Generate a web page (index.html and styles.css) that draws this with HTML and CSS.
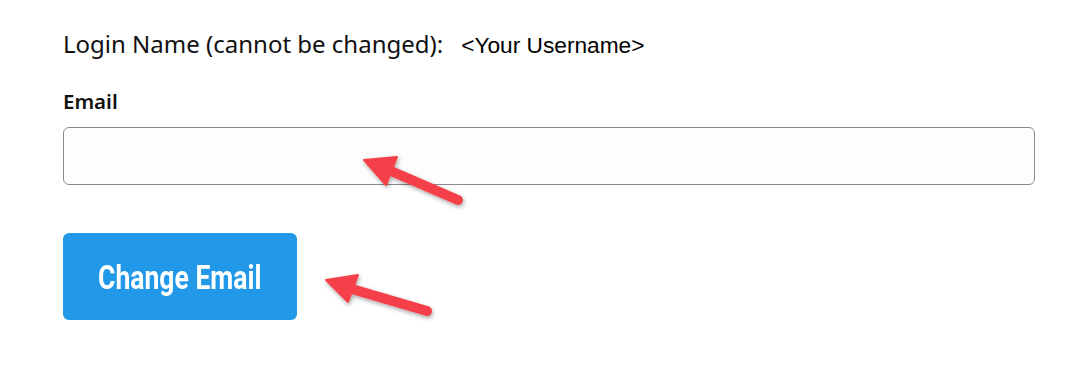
FILE: index.html
```html
<!DOCTYPE html>
<html>
<head>
	<title>Change Email</title>
	<meta charset="utf-8">
	<link rel="stylesheet" href="styles.css">
</head>
<body>
	<!--form start-->
	<div id="account">
		<div class="login_row">
			<span class="login_label">Login Name (cannot be changed):</span>
			<span class="login_value">&lt;Your Username&gt;</span>
		</div>
		<label class="email_label" for="email">Email</label>
		<input class="email_input" id="email" type="text">
		<button class="email_btn"><span>Change Email</span></button>

		<!--annotation arrows-->
		<svg class="arrows" width="1085" height="385" viewBox="0 0 1085 385">
			<defs>
				<filter id="shadow" x="-20%" y="-40%" width="140%" height="180%">
					<feDropShadow dx="1" dy="2" stdDeviation="2" flood-color="#000" flood-opacity="0.35"/>
				</filter>
			</defs>
			<g fill="#f54048" stroke="#f54048" filter="url(#shadow)">
				<line x1="458" y1="200" x2="384" y2="168" stroke-width="10" stroke-linecap="round"/>
				<polygon points="364,160 397,157 386,185" stroke-width="2" stroke-linejoin="round"/>
				<line x1="427" y1="311" x2="345" y2="287" stroke-width="10" stroke-linecap="round"/>
				<polygon points="326,280 358,275 348,302" stroke-width="2" stroke-linejoin="round"/>
			</g>
		</svg>
	</div>
	<!--end form-->
</body>
</html>
```

FILE: styles.css
```css
*{margin:0;padding:0;box-sizing:border-box;}
html,body{background:#fff;}
body{width:1085px;height:385px;overflow:hidden;}
/*form start*/
#account{position:relative;height:385px;padding:28px 50px 0 63px;display:flex;flex-direction:column;align-items:flex-start;}
#account .login_row{display:flex;align-items:baseline;height:32px;line-height:32px;}
#account .login_label{font-family:"Noto Sans",sans-serif;font-size:24px;color:#111;}
#account .login_value{font-family:"Liberation Sans",Arial,sans-serif;font-size:22.7px;color:#000;margin-left:18px;}
#account .email_label{font-family:"Noto Sans",sans-serif;font-size:20.5px;font-weight:600;color:#111;margin-top:28px;line-height:26px;}
#account .email_input{width:972px;height:58px;margin-top:13px;background:#fdfdfd;border:1px solid #8a8a8a;border-radius:6px;outline:none;}
#account .email_btn{width:234px;height:87px;margin-top:48px;background:#2299e8;border:none;border-radius:6px;color:#fff;display:flex;align-items:center;justify-content:center;}
#account .email_btn span{font-family:Roboto,sans-serif;font-weight:700;font-size:34px;display:inline-block;transform:scaleX(0.78);white-space:nowrap;}
#account .arrows{position:absolute;left:0;top:0;pointer-events:none;}
/*end form*/
```
